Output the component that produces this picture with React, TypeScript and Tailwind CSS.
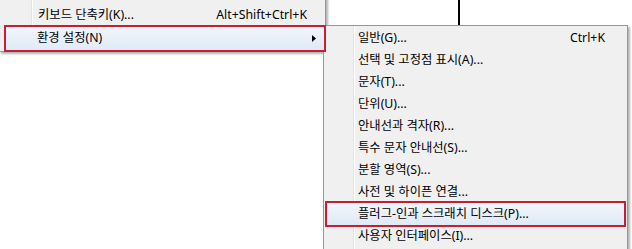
const font = "font-['Noto_Sans','Noto_Sans_CJK_KR',sans-serif]"

const subItems = [
  { label: '일반(G)...', shortcut: 'Ctrl+K' },
  { label: '선택 및 고정점 표시(A)...' },
  { label: '문자(T)...' },
  { label: '단위(U)...' },
  { label: '안내선과 격자(R)...' },
  { label: '특수 문자 안내선(S)...' },
  { label: '분할 영역(S)...' },
  { label: '사전 및 하이픈 연결...' },
  { label: '플러그-인과 스크래치 디스크(P)...', active: true },
  { label: '사용자 인터페이스(I)...' },
]

// win7 menu: gray body with a two-tone gutter line
const gutter = (x: 'a' | 'b') =>
  x === 'a'
    ? 'bg-[linear-gradient(to_right,#f0f0f0_31px,#e2e3e3_31px,#e2e3e3_32px,#fff_32px,#fff_33px,#f0f0f0_33px)]'
    : 'bg-[linear-gradient(to_right,#f0f0f0_29px,#e2e3e3_29px,#e2e3e3_30px,#fff_30px,#fff_31px,#f0f0f0_31px)]'

function Arrow() {
  return (
    <svg width="4" height="7" viewBox="0 0 4 7" className="shrink-0">
      <path d="M0 0 L4 3.5 L0 7 Z" fill="#000" />
    </svg>
  )
}

export default function App() {
  return (
    <div className={`relative w-[632px] h-[249px] overflow-hidden bg-white text-[12.3px] text-black ${font}`}>
      {/* document line behind the menus */}
      <div className="absolute left-[458px] top-0 h-[26px] w-[2px] bg-black" />

      {/* parent menu */}
      <div
        className={`absolute -left-px -top-[20px] flex w-[327px] flex-col border border-[#979797] pt-[23px] shadow-[2px_2px_2px_rgba(0,0,0,0.3)] ${gutter('a')}`}
      >
        <div className="flex h-[22px] items-center pl-[38px] pr-[18px]">
          <span className="flex-1">키보드 단축키(K)...</span>
          <span>Alt+Shift+Ctrl+K</span>
        </div>
        <div className="relative z-10 ml-[5px] flex h-[25px] items-center bg-gradient-to-b from-[#f2f6fc] to-[#e0e9f6] pl-[32px] pr-[9px] outline-2 -outline-offset-1 outline-[#c81e32]">
          <span className="flex-1">환경 설정(N)</span>
          <Arrow />
        </div>
      </div>

      {/* submenu */}
      <div
        className={`absolute left-[323px] top-[25px] flex w-[305px] flex-col border border-[#979797] pt-px pb-1 shadow-[2px_2px_2px_rgba(0,0,0,0.3)] ${gutter('b')}`}
      >
        {subItems.map((item) =>
          item.active ? (
            <div
              key={item.label}
              className="mx-[3px] flex h-[22px] items-center bg-gradient-to-b from-[#f2f6fc] to-[#e0e9f6] pl-[31px] pr-[19px] outline-2 outline-offset-0 outline-[#c81e32]"
            >
              <span className="flex-1">{item.label}</span>
            </div>
          ) : (
            <div key={item.label} className="flex h-[22px] items-center pl-[34px] pr-[22px]">
              <span className="flex-1">{item.label}</span>
              {item.shortcut && <span>{item.shortcut}</span>}
            </div>
          ),
        )}
      </div>
    </div>
  )
}
